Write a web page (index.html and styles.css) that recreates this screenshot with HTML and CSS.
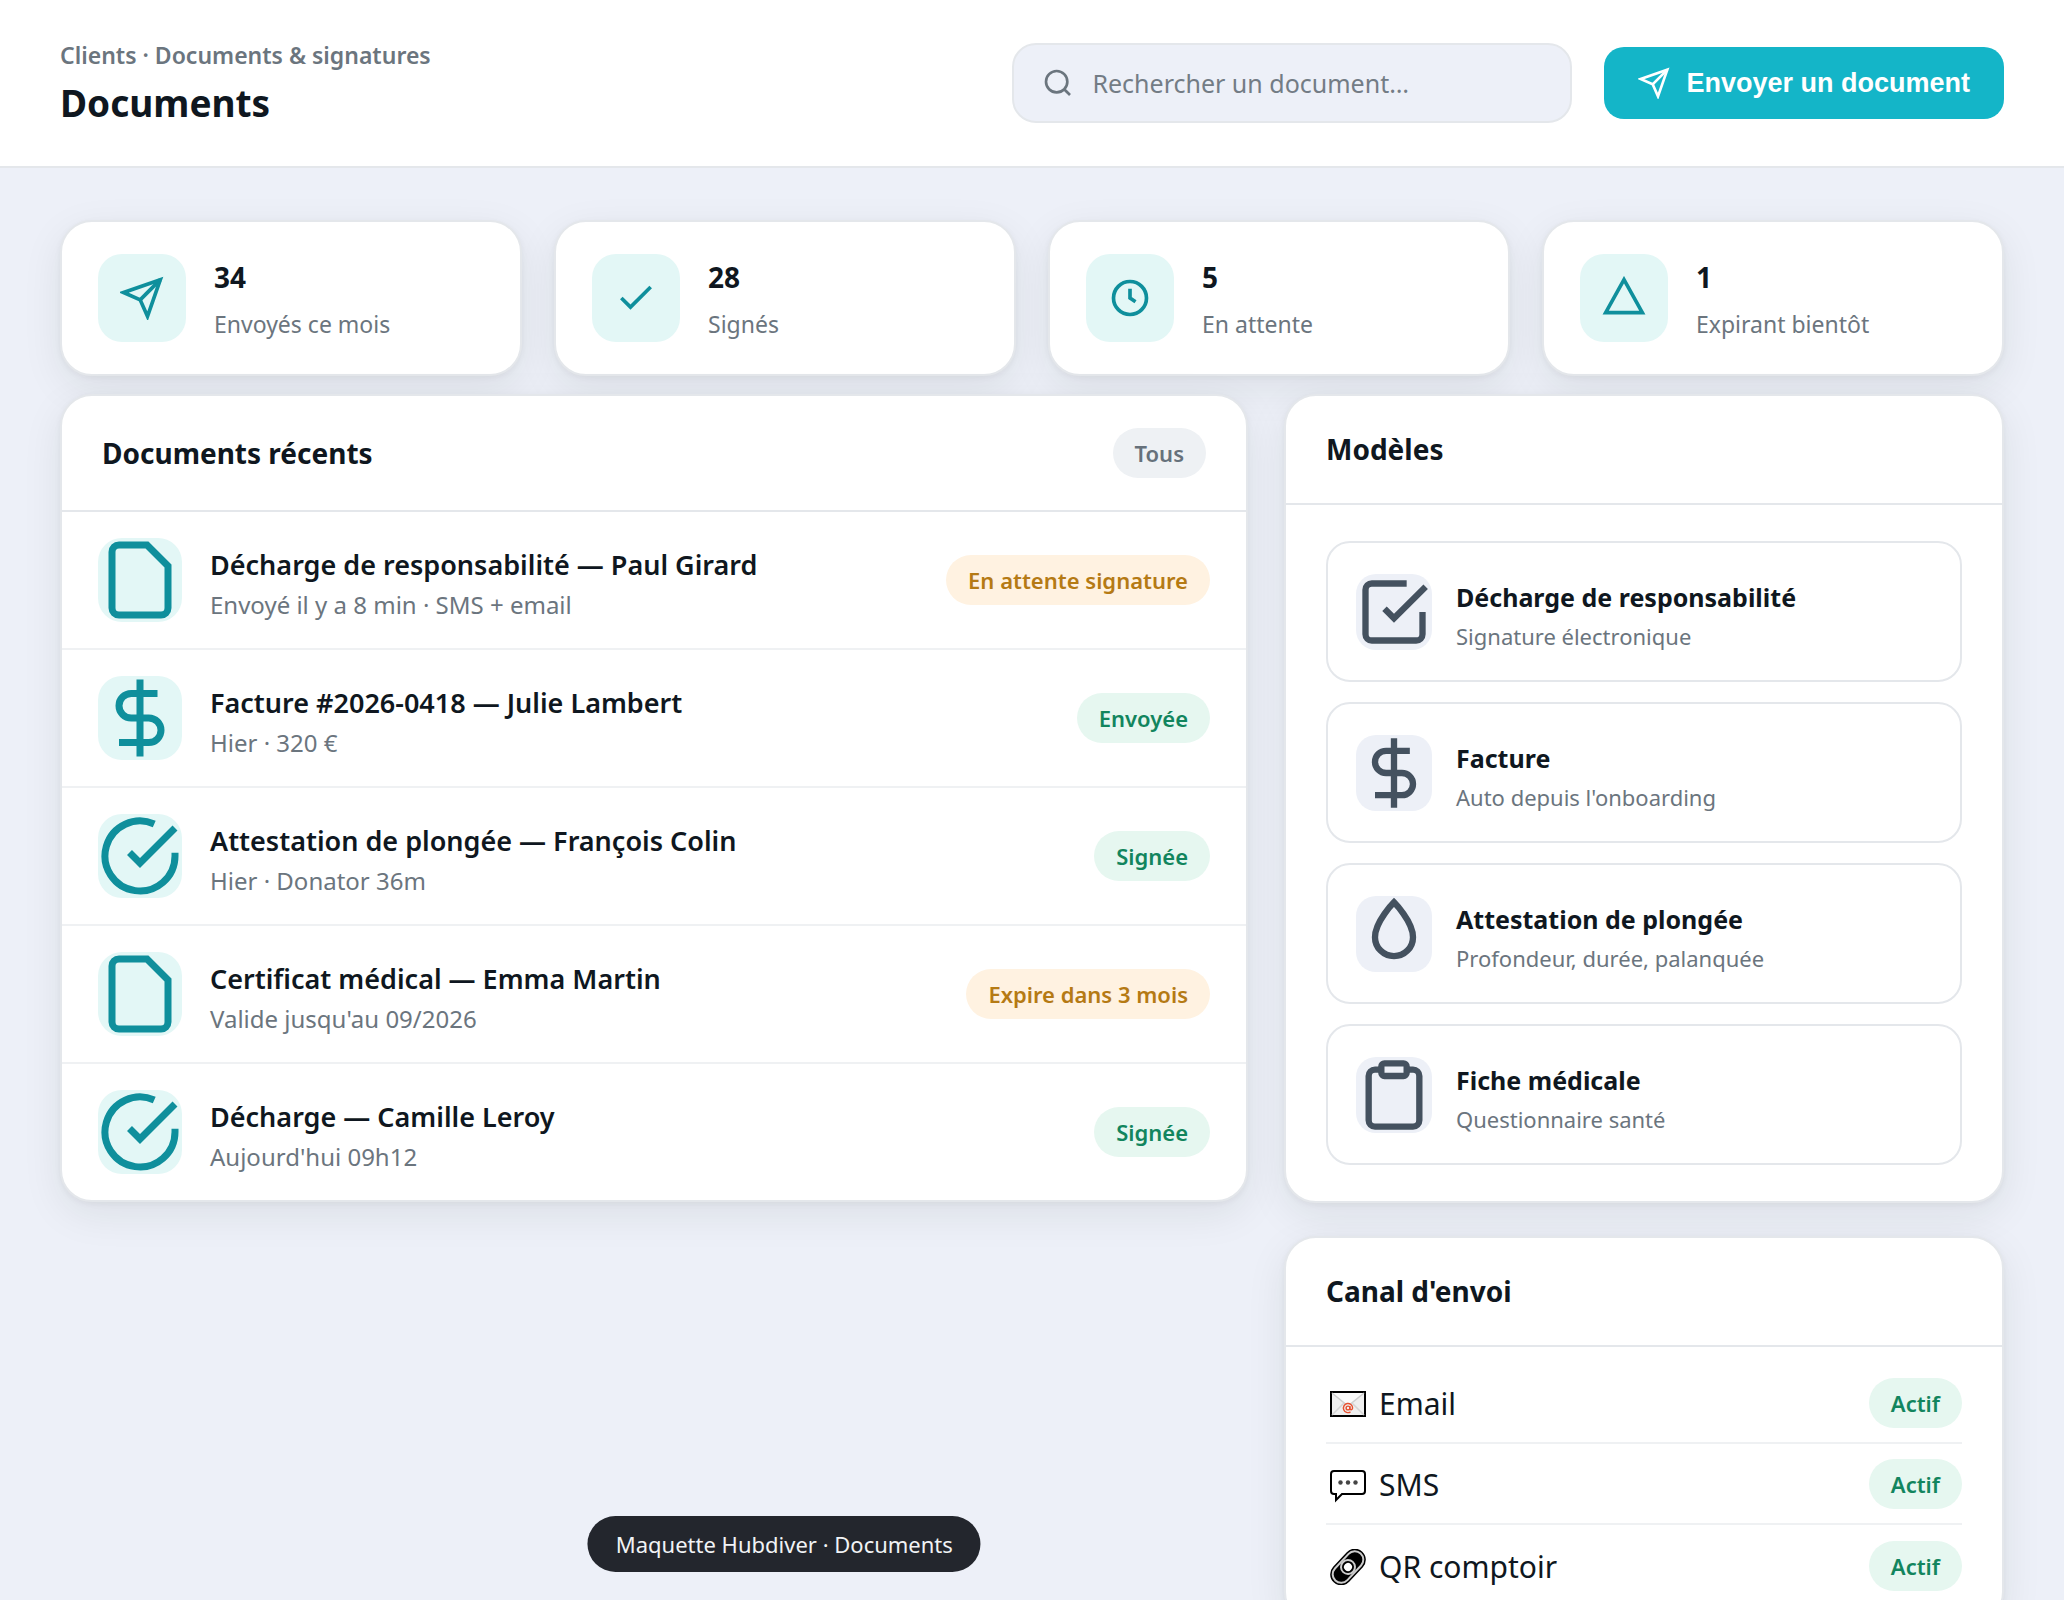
FILE: index.html
```html
<!DOCTYPE html>
<html lang="fr">
<head>
<meta charset="utf-8">
<meta name="viewport" content="width=device-width, initial-scale=1">
<title>Documents · Hubdiver</title>
<link rel="stylesheet" href="styles.css">
</head>
<body>
<svg class="sprite" aria-hidden="true">
  <symbol id="i-send" viewBox="0 0 24 24"><path d="M22 2 11 13"/><path d="M22 2 15 22 11 13 2 9z"/></symbol>
  <symbol id="i-search" viewBox="0 0 24 24"><circle cx="11" cy="11" r="8"/><path d="M21 21l-4.35-4.35"/></symbol>
  <symbol id="i-check" viewBox="0 0 24 24"><path d="M20 6 9 17l-5-5"/></symbol>
  <symbol id="i-clock" viewBox="0 0 24 24"><circle cx="12" cy="12" r="9"/><path d="M12 7v5l3 2"/></symbol>
  <symbol id="i-alert" viewBox="0 0 24 24"><path d="M12 2 22 20H2z"/></symbol>
  <symbol id="i-file" viewBox="0 0 24 24"><path d="M14 2H6a2 2 0 0 0-2 2v16a2 2 0 0 0 2 2h12a2 2 0 0 0 2-2V8z"/></symbol>
  <symbol id="i-dollar" viewBox="0 0 24 24"><path d="M12 1v22M17 5H9.5a3.5 3.5 0 0 0 0 7h5a3.5 3.5 0 0 1 0 7H6"/></symbol>
  <symbol id="i-check-circle" viewBox="0 0 24 24"><path d="M22 11.08V12a10 10 0 1 1-5.93-9.14"/><path d="M22 4 12 14.01l-3-3"/></symbol>
  <symbol id="i-check-square" viewBox="0 0 24 24"><path d="M9 11l3 3L22 4"/><path d="M21 12v7a2 2 0 0 1-2 2H5a2 2 0 0 1-2-2V5a2 2 0 0 1 2-2h11"/></symbol>
  <symbol id="i-drop" viewBox="0 0 24 24"><path d="M12 2s6 6 6 11a6 6 0 0 1-12 0c0-5 6-11 6-11z"/></symbol>
  <symbol id="i-clipboard" viewBox="0 0 24 24"><path d="M16 4h2a2 2 0 0 1 2 2v14a2 2 0 0 1-2 2H6a2 2 0 0 1-2-2V6a2 2 0 0 1 2-2h2"/><rect x="8" y="2" width="8" height="4" rx="1"/></symbol>
</svg>

<header class="topbar">
  <div class="heading">
    <p class="crumb">Clients · Documents &amp; signatures</p>
    <h1 class="title">Documents</h1>
  </div>
  <div class="actions">
    <label class="search">
      <svg class="icon icon-sm"><use href="#i-search"/></svg>
      <input class="search-input" type="search" placeholder="Rechercher un document…" aria-label="Rechercher un document">
    </label>
    <button class="btn" type="button"><svg class="icon icon-sm"><use href="#i-send"/></svg>Envoyer un document</button>
  </div>
</header>

<main class="content">
  <section class="stats">
    <div class="card stat"><span class="stat-icon"><svg class="icon icon-md"><use href="#i-send"/></svg></span><div class="stat-text"><strong class="stat-value">34</strong><span class="stat-label">Envoyés ce mois</span></div></div>
    <div class="card stat"><span class="stat-icon"><svg class="icon icon-md"><use href="#i-check"/></svg></span><div class="stat-text"><strong class="stat-value">28</strong><span class="stat-label">Signés</span></div></div>
    <div class="card stat"><span class="stat-icon"><svg class="icon icon-md"><use href="#i-clock"/></svg></span><div class="stat-text"><strong class="stat-value">5</strong><span class="stat-label">En attente</span></div></div>
    <div class="card stat"><span class="stat-icon"><svg class="icon icon-md"><use href="#i-alert"/></svg></span><div class="stat-text"><strong class="stat-value">1</strong><span class="stat-label">Expirant bientôt</span></div></div>
  </section>

  <div class="columns">
    <section class="card">
      <div class="card-head"><h2 class="card-title">Documents récents</h2><span class="pill">Tous</span></div>
      <ul class="list">
        <li class="doc"><span class="doc-icon"><svg class="icon"><use href="#i-file"/></svg></span><div class="doc-text"><h3 class="doc-title">Décharge de responsabilité — Paul Girard</h3><p class="doc-sub">Envoyé il y a 8 min · SMS + email</p></div><span class="pill pill-warn">En attente signature</span></li>
        <li class="doc"><span class="doc-icon"><svg class="icon"><use href="#i-dollar"/></svg></span><div class="doc-text"><h3 class="doc-title">Facture #2026-0418 — Julie Lambert</h3><p class="doc-sub">Hier · 320 €</p></div><span class="pill pill-ok">Envoyée</span></li>
        <li class="doc"><span class="doc-icon"><svg class="icon"><use href="#i-check-circle"/></svg></span><div class="doc-text"><h3 class="doc-title">Attestation de plongée — François Colin</h3><p class="doc-sub">Hier · Donator 36m</p></div><span class="pill pill-ok">Signée</span></li>
        <li class="doc"><span class="doc-icon"><svg class="icon"><use href="#i-file"/></svg></span><div class="doc-text"><h3 class="doc-title">Certificat médical — Emma Martin</h3><p class="doc-sub">Valide jusqu'au 09/2026</p></div><span class="pill pill-warn">Expire dans 3 mois</span></li>
        <li class="doc"><span class="doc-icon"><svg class="icon"><use href="#i-check-circle"/></svg></span><div class="doc-text"><h3 class="doc-title">Décharge — Camille Leroy</h3><p class="doc-sub">Aujourd'hui 09h12</p></div><span class="pill pill-ok">Signée</span></li>
      </ul>
    </section>

    <div class="side">
      <section class="card">
        <div class="card-head"><h2 class="card-title">Modèles</h2></div>
        <ul class="list models">
          <li class="model"><span class="model-icon"><svg class="icon"><use href="#i-check-square"/></svg></span><div class="model-text"><h3 class="model-title">Décharge de responsabilité</h3><p class="model-sub">Signature électronique</p></div></li>
          <li class="model"><span class="model-icon"><svg class="icon"><use href="#i-dollar"/></svg></span><div class="model-text"><h3 class="model-title">Facture</h3><p class="model-sub">Auto depuis l'onboarding</p></div></li>
          <li class="model"><span class="model-icon"><svg class="icon"><use href="#i-drop"/></svg></span><div class="model-text"><h3 class="model-title">Attestation de plongée</h3><p class="model-sub">Profondeur, durée, palanquée</p></div></li>
          <li class="model"><span class="model-icon"><svg class="icon"><use href="#i-clipboard"/></svg></span><div class="model-text"><h3 class="model-title">Fiche médicale</h3><p class="model-sub">Questionnaire santé</p></div></li>
        </ul>
      </section>

      <section class="card">
        <div class="card-head"><h2 class="card-title">Canal d'envoi</h2></div>
        <ul class="list channels">
          <li class="channel">
            <svg class="emoji" viewBox="0 0 36 36" aria-hidden="true">
              <rect x="1" y="6" width="34" height="24" fill="#efefef" stroke="#000" stroke-width="2"/>
              <path d="M2 7l16 13L34 7" fill="#fbfbfb" stroke="#cfcfcf" stroke-width="1.5"/>
              <path d="M2 29l12-12M34 29 22 17" stroke="#d4d4d4" stroke-width="1.5"/>
              <circle cx="18" cy="22" r="4.5" fill="#efefef"/>
              <circle cx="18" cy="22" r="1.9" fill="none" stroke="#e8502f" stroke-width="1.4"/>
              <path d="M19.9 20v2.6c0 1.7 2.7 1.4 2.7-.6a4.6 4.6 0 1 0-2.1 3.9" fill="none" stroke="#e8502f" stroke-width="1.4"/>
            </svg>
            <span class="channel-name">Email</span><span class="pill pill-ok">Actif</span></li>
          <li class="channel">
            <svg class="emoji" viewBox="0 0 36 36" aria-hidden="true">
              <path d="M4 4h28a3 3 0 0 1 3 3v17a3 3 0 0 1-3 3H12l-6 6v-6H4a3 3 0 0 1-3-3V7a3 3 0 0 1 3-3z" fill="#fff" stroke="#000" stroke-width="2"/>
              <circle cx="10.5" cy="15.5" r="2.2" fill="#444"/><circle cx="18" cy="15.5" r="2.2" fill="#444"/><circle cx="25.5" cy="15.5" r="2.2" fill="#444"/>
            </svg>
            <span class="channel-name">SMS</span><span class="pill pill-ok">Actif</span></li>
          <li class="channel">
            <svg class="emoji" viewBox="0 0 36 36" aria-hidden="true">
              <g transform="rotate(-47 18 18)">
                <rect x="-3" y="7" width="42" height="22" rx="11"/>
                <rect x="-.5" y="9.5" width="37" height="17" rx="8.5" fill="none" stroke="#ccc" stroke-width="2"/>
                <circle cx="18" cy="18" r="7" stroke="#ccc" stroke-width="2"/>
                <circle cx="18" cy="18" r="4" fill="#fff"/>
              </g>
            </svg>
            <span class="channel-name">QR comptoir</span><span class="pill pill-ok">Actif</span></li>
        </ul>
      </section>
    </div>
  </div>
</main>

<div class="toast" role="status">Maquette Hubdiver · Documents</div>
</body>
</html>
```
FILE: styles.css
```css
:root {
  --bg: #edf0f8;
  --line: #e4e7eb;
  --line-soft: #eff1f3;
  --ink: #0f1720;
  --muted: #6b757e;
  --teal: #0f8f9c;
  --teal-soft: #e3f7f6;
}

* { box-sizing: border-box; }

body {
  margin: 0;
  background: var(--bg);
  color: var(--ink);
  font-family: "Segoe UI", "Noto Sans", sans-serif;
  font-size: 24px;
}

h1, h2, h3, p, ul { margin: 0; padding: 0; }

.sprite { display: none; }

.icon {
  display: block;
  width: 100%;
  height: 100%;
  fill: none;
  stroke: currentColor;
  stroke-width: 2;
}
.icon-sm { width: 32px; height: 32px; flex: none; }
.icon-md { width: 44px; height: 44px; }

/* Top bar */
.topbar {
  display: flex;
  align-items: center;
  justify-content: space-between;
  gap: 32px;
  min-height: 168px;
  padding: 0 60px;
  background: #fff;
  border-bottom: 2px solid var(--line);
}
.heading { display: grid; gap: 8px; }
.crumb { color: var(--muted); font-weight: 600; font-size: 23px; line-height: 32px; }
.title { font-weight: 700; font-size: 37px; line-height: 48px; }

.actions { display: flex; align-items: center; gap: 32px; }
.search {
  display: flex;
  align-items: center;
  gap: 18px;
  width: 560px;
  height: 80px;
  padding: 0 28px;
  background: var(--bg);
  border: 2px solid var(--line);
  border-radius: 24px;
  color: var(--muted);
}
.search-input {
  flex: 1;
  min-width: 0;
  padding: 0;
  border: 0;
  outline: 0;
  background: none;
  color: var(--ink);
  font-family: inherit;
  font-size: 25px;
  line-height: 34px;
}
.search-input::placeholder { color: #737c85; opacity: 1; }

.btn {
  display: flex;
  align-items: center;
  gap: 16px;
  height: 72px;
  padding: 0 34px;
  border: 0;
  border-radius: 20px;
  background: #14b5c8;
  color: #fff;
  font-family: Arial, "Liberation Sans", sans-serif;
  font-weight: 700;
  font-size: 27px;
}

/* Content */
.content { display: grid; gap: 18px; padding: 52px 60px; }

.card {
  background: #fff;
  border: 2px solid var(--line);
  border-radius: 32px;
  box-shadow: 0 2px 6px rgba(30, 34, 28, .05), 0 12px 40px rgba(30, 34, 28, .08);
}

.stats { display: grid; grid-template-columns: repeat(4, 1fr); gap: 32px; }
.stat { display: flex; align-items: center; gap: 28px; padding: 32px 36px; }
.stat-icon {
  display: grid;
  place-items: center;
  flex: none;
  width: 88px;
  height: 88px;
  border-radius: 24px;
  background: var(--teal-soft);
  color: var(--teal);
}
.stat-text { display: grid; gap: 11px; }
.stat-value { font-weight: 700; font-size: 28px; line-height: 40px; }
.stat-label { color: var(--muted); font-size: 23px; line-height: 32px; }

.columns {
  display: grid;
  grid-template-columns: 165fr 100fr;
  gap: 36px;
  align-items: start;
}
.side { display: grid; gap: 33px; }

.card-head {
  display: flex;
  align-items: center;
  justify-content: space-between;
  padding: 32px 40px;
  border-bottom: 2px solid var(--line);
}
.card-title { font-weight: 700; font-size: 28px; line-height: 43px; }

.list { list-style: none; }

.pill {
  flex: none;
  padding: 10px 22px;
  border-radius: 25px;
  background: #eef1f4;
  color: #66717b;
  font-weight: 600;
  font-size: 22px;
  line-height: 30px;
}
.pill-ok { background: #e6f7f0; color: #12855e; }
.pill-warn { background: #fff2e1; color: #b57a14; }

/* Recent documents */
.doc { display: flex; align-items: center; gap: 28px; padding: 26px 36px; }
.doc + .doc { border-top: 2px solid var(--line-soft); }
.doc-icon {
  flex: none;
  width: 84px;
  height: 84px;
  border-radius: 24px;
  background: var(--teal-soft);
  color: var(--teal);
}
.doc-text { display: grid; gap: 4px; flex: 1; min-width: 0; }
.doc-title { font-weight: 600; font-size: 27px; line-height: 45px; }
.doc-sub { color: var(--muted); font-size: 24px; line-height: 28px; }

/* Templates */
.models { display: grid; gap: 20px; padding: 36px 40px; }
.model {
  display: flex;
  align-items: center;
  gap: 24px;
  padding: 30px 28px;
  border: 2px solid var(--line);
  border-radius: 24px;
}
.model-icon {
  flex: none;
  width: 76px;
  height: 76px;
  border-radius: 20px;
  background: #edf0f7;
  color: #44515f;
}
.model-text { flex: 1; min-width: 0; }
.model-title { font-weight: 700; font-size: 25px; line-height: 49px; }
.model-sub { color: var(--muted); font-size: 22px; line-height: 28px; }

/* Channels */
.channels { padding: 16px 40px; }
.channel {
  display: flex;
  align-items: center;
  min-height: 81px;
  border-bottom: 2px solid var(--line-soft);
}
.channel:last-child { border-bottom: 0; }
.emoji { flex: none; width: 36px; height: 36px; margin: 2px 13px 0 4px; }
.channel-name { flex: 1; padding-top: 3px; font-size: 30px; line-height: 40px; }

.toast {
  position: fixed;
  bottom: 28px;
  left: 38%;
  transform: translateX(-50%);
  padding: 12px 28px;
  border-radius: 28px;
  background: #23262d;
  color: #f1f3f5;
  font-size: 22px;
  line-height: 32px;
  white-space: nowrap;
}
```
